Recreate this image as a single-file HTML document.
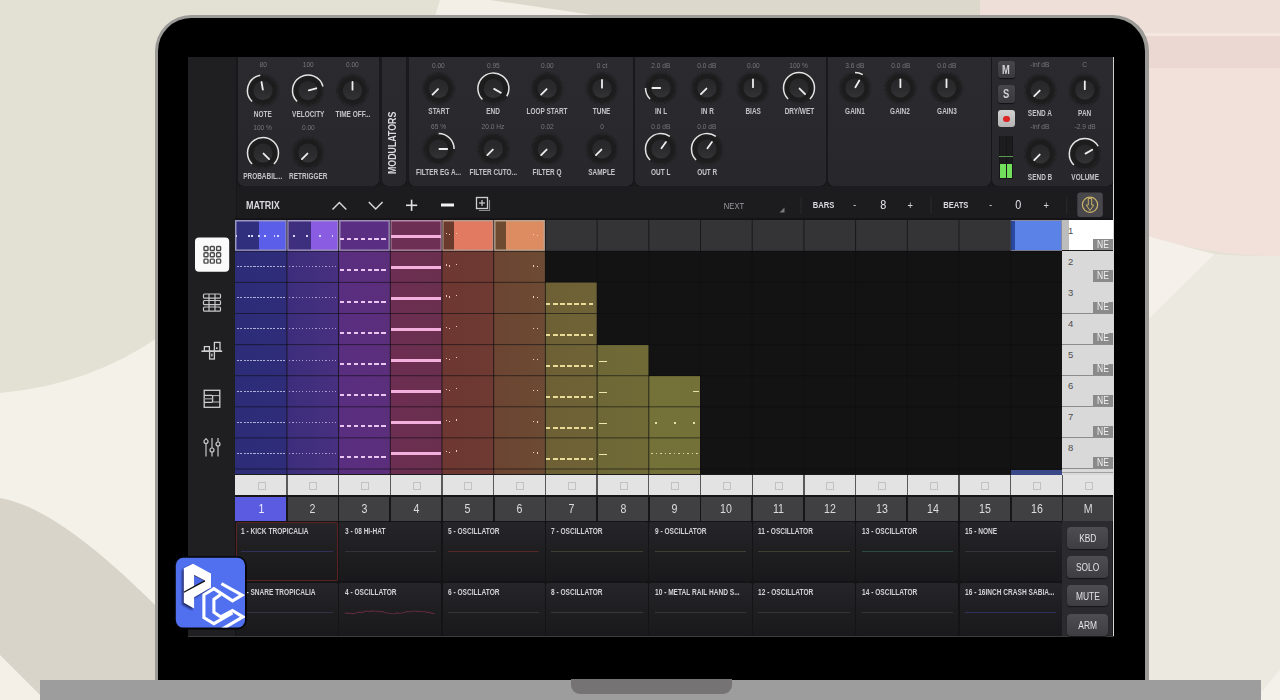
<!DOCTYPE html>
<html><head><meta charset="utf-8"><style>
html,body{margin:0;padding:0;width:1280px;height:700px;overflow:hidden;background:#e2e0d2}
body{position:relative;font-family:"Liberation Sans",sans-serif}
.t{position:absolute;white-space:nowrap}
</style></head><body>
<svg width="1280" height="700" style="position:absolute;left:0;top:0">
<defs>
<filter id="blur2"><feGaussianBlur stdDeviation="1.2"/></filter>
</defs>
<rect width="1280" height="700" fill="#e3e1d4"/>
<path d="M0,393 Q90,385 160,336 L160,700 L0,700 Z" fill="#f4f1e9"/>
<path d="M0,498 C40,505 90,540 160,610 L160,700 L0,700 Z" fill="#d9d4c9"/>
<path d="M0,655 L45,700 L0,700 Z" fill="#f4f0e8"/>
<path d="M440,0 L600,0 L600,16 L435,16 Z" fill="#f3efe6"/>
<path d="M490,0 L990,0 L990,16 L600,16 Z" fill="#ddd8cc"/>
<path d="M980,0 H1280 V256 C1240,256 1200,252 1148,236 L1100,236 L1100,16 L980,16 Z" fill="#f2e1db"/>
<rect x="980" y="0" width="300" height="33" fill="#efdfd9"/>
<rect x="1100" y="33" width="180" height="3" fill="#f4e6e1"/>
<rect x="1100" y="36" width="180" height="32" fill="#ecd8d2"/>
<path d="M1148,236 C1190,248 1210,253 1215,254 L1148,320 Z" fill="#f5f1ea"/>
<path d="M1148,320 L1215,254 C1240,256 1260,256 1280,256 L1280,700 L1148,700 Z" fill="#eceae0"/>
<path d="M1255,700 L1280,670 L1280,700 Z" fill="#f4f1ea"/>
</svg>
<div style="position:absolute;left:154.5px;top:14.5px;width:994px;height:700px;background:#9b9a97;border-radius:36px 36px 0 0"></div>
<div style="position:absolute;left:158px;top:18px;width:987px;height:700px;background:#000;border-radius:33px 33px 0 0"></div>
<div style="position:absolute;left:40.0px;top:680.0px;width:1221.0px;height:20.0px;background:#9d9d9d"></div>
<div style="position:absolute;left:571.0px;top:679.0px;width:161.0px;height:15.0px;background:#757373;border-radius:0 0 9px 9px"></div>
<div style="position:absolute;left:188.0px;top:57.0px;width:925.5px;height:579.5px;background:#1b1b1e"></div>
<div style="position:absolute;left:1112.5px;top:57.0px;width:1.5px;height:579.5px;background:#d8d8d8"></div>
<div style="position:absolute;left:188.0px;top:635.5px;width:925.5px;height:1.3px;background:#3c3c3e"></div>
<div style="position:absolute;left:188.0px;top:57.0px;width:48.0px;height:579.0px;background:#1f1f22"></div>
<div style="position:absolute;left:235.5px;top:57.0px;width:1.5px;height:579.0px;background:#161618"></div>
<div style="position:absolute;left:238.0px;top:57.0px;width:140.5px;height:128.5px;background:linear-gradient(180deg,#2b2b2f 0%,#28282c 100%);border-radius:0 0 6px 6px;box-shadow:0 1px 1px rgba(0,0,0,.5)"></div>
<div style="position:absolute;left:381.5px;top:57.0px;width:24.5px;height:128.5px;background:linear-gradient(180deg,#2b2b2f 0%,#28282c 100%);border-radius:0 0 6px 6px;box-shadow:0 1px 1px rgba(0,0,0,.5)"></div>
<div style="position:absolute;left:409.0px;top:57.0px;width:224.0px;height:128.5px;background:linear-gradient(180deg,#2b2b2f 0%,#28282c 100%);border-radius:0 0 6px 6px;box-shadow:0 1px 1px rgba(0,0,0,.5)"></div>
<div style="position:absolute;left:635.0px;top:57.0px;width:191.0px;height:128.5px;background:linear-gradient(180deg,#2b2b2f 0%,#28282c 100%);border-radius:0 0 6px 6px;box-shadow:0 1px 1px rgba(0,0,0,.5)"></div>
<div style="position:absolute;left:828.0px;top:57.0px;width:162.5px;height:128.5px;background:linear-gradient(180deg,#2b2b2f 0%,#28282c 100%);border-radius:0 0 6px 6px;box-shadow:0 1px 1px rgba(0,0,0,.5)"></div>
<div style="position:absolute;left:992.0px;top:57.0px;width:120.5px;height:128.5px;background:linear-gradient(180deg,#2b2b2f 0%,#28282c 100%);border-radius:0 0 6px 6px;box-shadow:0 1px 1px rgba(0,0,0,.5)"></div>
<div class="t" style="left:341.5px;top:136px;width:100px;height:14px;line-height:14px;text-align:center;font-size:10.5px;color:#dcdce0;font-weight:bold;transform:rotate(-90deg);"><span style="display:inline-block;transform:scaleX(0.84)">MODULATORS</span></div>
<svg width="1280" height="700" style="position:absolute;left:0;top:0">
<defs><radialGradient id="halo" cx="50%" cy="55%" r="50%"><stop offset="0%" stop-color="#141416" stop-opacity="0.95"/><stop offset="70%" stop-color="#18181a" stop-opacity="0.7"/><stop offset="100%" stop-color="#1c1c1f" stop-opacity="0"/></radialGradient>
<filter id="kblur" x="-30%" y="-30%" width="160%" height="160%"><feGaussianBlur stdDeviation="0.9"/></filter><linearGradient id="kb" x1="0" y1="0" x2="0" y2="1"><stop offset="0%" stop-color="#27272a"/><stop offset="55%" stop-color="#2b2b2e"/><stop offset="100%" stop-color="#333336"/></linearGradient></defs>
<circle cx="263" cy="90.5" r="15" fill="#1c1c1f" filter="url(#kblur)"/>
<circle cx="263" cy="90.5" r="9.6" fill="url(#kb)"/>
<line x1="262.86" y1="89.71" x2="261.51" y2="82.03" stroke="#ededed" stroke-width="1.8" stroke-linecap="round"/>
<path d="M252.04,101.46 A15.5,15.5 0 0 1 260.31,75.24" fill="none" stroke="#e4e4e4" stroke-width="1.5"/>
<circle cx="308" cy="90.5" r="15" fill="#1c1c1f" filter="url(#kblur)"/>
<circle cx="308" cy="90.5" r="9.6" fill="url(#kb)"/>
<line x1="308.77" y1="90.29" x2="316.31" y2="88.27" stroke="#ededed" stroke-width="1.8" stroke-linecap="round"/>
<path d="M297.04,101.46 A15.5,15.5 0 1 1 322.97,86.49" fill="none" stroke="#e4e4e4" stroke-width="1.5"/>
<circle cx="352.5" cy="90.5" r="15" fill="#1c1c1f" filter="url(#kblur)"/>
<circle cx="352.5" cy="90.5" r="9.6" fill="url(#kb)"/>
<line x1="352.50" y1="89.70" x2="352.50" y2="81.90" stroke="#ededed" stroke-width="1.8" stroke-linecap="round"/>
<circle cx="263" cy="153" r="15" fill="#1c1c1f" filter="url(#kblur)"/>
<circle cx="263" cy="153" r="9.6" fill="url(#kb)"/>
<line x1="263.57" y1="153.57" x2="269.08" y2="159.08" stroke="#ededed" stroke-width="1.8" stroke-linecap="round"/>
<path d="M252.04,163.96 A15.5,15.5 0 1 1 273.96,163.96" fill="none" stroke="#e4e4e4" stroke-width="1.5"/>
<circle cx="308" cy="153" r="15" fill="#1c1c1f" filter="url(#kblur)"/>
<circle cx="308" cy="153" r="9.6" fill="url(#kb)"/>
<line x1="307.43" y1="153.57" x2="301.92" y2="159.08" stroke="#ededed" stroke-width="1.8" stroke-linecap="round"/>
<circle cx="438.6" cy="88.5" r="15" fill="#1c1c1f" filter="url(#kblur)"/>
<circle cx="438.6" cy="88.5" r="9.6" fill="url(#kb)"/>
<line x1="438.03" y1="89.07" x2="432.52" y2="94.58" stroke="#ededed" stroke-width="1.8" stroke-linecap="round"/>
<circle cx="493.4" cy="88.5" r="15" fill="#1c1c1f" filter="url(#kblur)"/>
<circle cx="493.4" cy="88.5" r="9.6" fill="url(#kb)"/>
<line x1="494.09" y1="88.90" x2="500.85" y2="92.80" stroke="#ededed" stroke-width="1.8" stroke-linecap="round"/>
<path d="M482.44,99.46 A15.5,15.5 0 1 1 506.82,96.25" fill="none" stroke="#e4e4e4" stroke-width="1.5"/>
<circle cx="547.2" cy="88.5" r="15" fill="#1c1c1f" filter="url(#kblur)"/>
<circle cx="547.2" cy="88.5" r="9.6" fill="url(#kb)"/>
<line x1="546.63" y1="89.07" x2="541.12" y2="94.58" stroke="#ededed" stroke-width="1.8" stroke-linecap="round"/>
<circle cx="602" cy="88.5" r="15" fill="#1c1c1f" filter="url(#kblur)"/>
<circle cx="602" cy="88.5" r="9.6" fill="url(#kb)"/>
<line x1="602.00" y1="87.70" x2="602.00" y2="79.90" stroke="#ededed" stroke-width="1.8" stroke-linecap="round"/>
<circle cx="438.6" cy="149" r="15" fill="#1c1c1f" filter="url(#kblur)"/>
<circle cx="438.6" cy="149" r="9.6" fill="url(#kb)"/>
<line x1="439.40" y1="149.00" x2="447.20" y2="149.00" stroke="#ededed" stroke-width="1.8" stroke-linecap="round"/>
<path d="M438.60,133.50 A15.5,15.5 0 0 1 454.10,149.00" fill="none" stroke="#e4e4e4" stroke-width="1.5"/>
<circle cx="493.4" cy="149" r="15" fill="#1c1c1f" filter="url(#kblur)"/>
<circle cx="493.4" cy="149" r="9.6" fill="url(#kb)"/>
<line x1="492.83" y1="149.57" x2="487.32" y2="155.08" stroke="#ededed" stroke-width="1.8" stroke-linecap="round"/>
<circle cx="547.2" cy="149" r="15" fill="#1c1c1f" filter="url(#kblur)"/>
<circle cx="547.2" cy="149" r="9.6" fill="url(#kb)"/>
<line x1="546.63" y1="149.57" x2="541.12" y2="155.08" stroke="#ededed" stroke-width="1.8" stroke-linecap="round"/>
<circle cx="602" cy="149" r="15" fill="#1c1c1f" filter="url(#kblur)"/>
<circle cx="602" cy="149" r="9.6" fill="url(#kb)"/>
<line x1="601.43" y1="149.57" x2="595.92" y2="155.08" stroke="#ededed" stroke-width="1.8" stroke-linecap="round"/>
<circle cx="661" cy="88" r="15" fill="#1c1c1f" filter="url(#kblur)"/>
<circle cx="661" cy="88" r="9.6" fill="url(#kb)"/>
<line x1="660.20" y1="88.00" x2="652.40" y2="88.00" stroke="#ededed" stroke-width="1.8" stroke-linecap="round"/>
<path d="M650.04,98.96 A15.5,15.5 0 0 1 645.50,88.00" fill="none" stroke="#e4e4e4" stroke-width="1.5"/>
<circle cx="707" cy="88" r="15" fill="#1c1c1f" filter="url(#kblur)"/>
<circle cx="707" cy="88" r="9.6" fill="url(#kb)"/>
<line x1="706.43" y1="88.57" x2="700.92" y2="94.08" stroke="#ededed" stroke-width="1.8" stroke-linecap="round"/>
<circle cx="753" cy="88" r="15" fill="#1c1c1f" filter="url(#kblur)"/>
<circle cx="753" cy="88" r="9.6" fill="url(#kb)"/>
<line x1="753.00" y1="87.20" x2="753.00" y2="79.40" stroke="#ededed" stroke-width="1.8" stroke-linecap="round"/>
<circle cx="799" cy="88" r="15" fill="#1c1c1f" filter="url(#kblur)"/>
<circle cx="799" cy="88" r="9.6" fill="url(#kb)"/>
<line x1="799.57" y1="88.57" x2="805.08" y2="94.08" stroke="#ededed" stroke-width="1.8" stroke-linecap="round"/>
<path d="M788.04,98.96 A15.5,15.5 0 1 1 809.96,98.96" fill="none" stroke="#e4e4e4" stroke-width="1.5"/>
<circle cx="661" cy="149" r="15" fill="#1c1c1f" filter="url(#kblur)"/>
<circle cx="661" cy="149" r="9.6" fill="url(#kb)"/>
<line x1="661.46" y1="148.34" x2="665.93" y2="141.96" stroke="#ededed" stroke-width="1.8" stroke-linecap="round"/>
<path d="M650.04,159.96 A15.5,15.5 0 0 1 669.89,136.30" fill="none" stroke="#e4e4e4" stroke-width="1.5"/>
<circle cx="707" cy="149" r="15" fill="#1c1c1f" filter="url(#kblur)"/>
<circle cx="707" cy="149" r="9.6" fill="url(#kb)"/>
<line x1="707.46" y1="148.34" x2="711.93" y2="141.96" stroke="#ededed" stroke-width="1.8" stroke-linecap="round"/>
<path d="M696.04,159.96 A15.5,15.5 0 0 1 715.89,136.30" fill="none" stroke="#e4e4e4" stroke-width="1.5"/>
<circle cx="855" cy="88" r="15" fill="#1c1c1f" filter="url(#kblur)"/>
<circle cx="855" cy="88" r="9.6" fill="url(#kb)"/>
<line x1="855.40" y1="87.31" x2="859.30" y2="80.55" stroke="#ededed" stroke-width="1.8" stroke-linecap="round"/>
<path d="M855.00,72.50 A15.5,15.5 0 0 1 862.75,74.58" fill="none" stroke="#e4e4e4" stroke-width="1.5"/>
<circle cx="900.4" cy="88" r="15" fill="#1c1c1f" filter="url(#kblur)"/>
<circle cx="900.4" cy="88" r="9.6" fill="url(#kb)"/>
<line x1="900.40" y1="87.20" x2="900.40" y2="79.40" stroke="#ededed" stroke-width="1.8" stroke-linecap="round"/>
<circle cx="946.5" cy="88" r="15" fill="#1c1c1f" filter="url(#kblur)"/>
<circle cx="946.5" cy="88" r="9.6" fill="url(#kb)"/>
<line x1="946.50" y1="87.20" x2="946.50" y2="79.40" stroke="#ededed" stroke-width="1.8" stroke-linecap="round"/>
<circle cx="1040.3" cy="90" r="15" fill="#1c1c1f" filter="url(#kblur)"/>
<circle cx="1040.3" cy="90" r="9.6" fill="url(#kb)"/>
<line x1="1039.73" y1="90.57" x2="1034.22" y2="96.08" stroke="#ededed" stroke-width="1.8" stroke-linecap="round"/>
<circle cx="1084.8" cy="90" r="15" fill="#1c1c1f" filter="url(#kblur)"/>
<circle cx="1084.8" cy="90" r="9.6" fill="url(#kb)"/>
<line x1="1084.80" y1="89.20" x2="1084.80" y2="81.40" stroke="#ededed" stroke-width="1.8" stroke-linecap="round"/>
<circle cx="1040.3" cy="154" r="15" fill="#1c1c1f" filter="url(#kblur)"/>
<circle cx="1040.3" cy="154" r="9.6" fill="url(#kb)"/>
<line x1="1039.73" y1="154.57" x2="1034.22" y2="160.08" stroke="#ededed" stroke-width="1.8" stroke-linecap="round"/>
<circle cx="1084.8" cy="154" r="15" fill="#1c1c1f" filter="url(#kblur)"/>
<circle cx="1084.8" cy="154" r="9.6" fill="url(#kb)"/>
<line x1="1085.49" y1="153.60" x2="1092.25" y2="149.70" stroke="#ededed" stroke-width="1.8" stroke-linecap="round"/>
<path d="M1073.84,164.96 A15.5,15.5 0 1 1 1098.22,146.25" fill="none" stroke="#e4e4e4" stroke-width="1.5"/>
</svg>
<div class="t" style="left:163.0px;top:56.9px;width:200px;height:15.0px;line-height:15.0px;text-align:center;font-size:7.5px;color:#77777c;font-weight:normal;"><span style="display:inline-block;transform:scaleX(0.88);transform-origin:center;letter-spacing:0px">80</span></div>
<div class="t" style="left:163.0px;top:105.5px;width:200px;height:17.0px;line-height:17.0px;text-align:center;font-size:8.5px;color:#c4c4c8;font-weight:bold;"><span style="display:inline-block;transform:scaleX(0.76);transform-origin:center;letter-spacing:0px">NOTE</span></div>
<div class="t" style="left:208.0px;top:56.9px;width:200px;height:15.0px;line-height:15.0px;text-align:center;font-size:7.5px;color:#77777c;font-weight:normal;"><span style="display:inline-block;transform:scaleX(0.88);transform-origin:center;letter-spacing:0px">100</span></div>
<div class="t" style="left:208.0px;top:105.5px;width:200px;height:17.0px;line-height:17.0px;text-align:center;font-size:8.5px;color:#c4c4c8;font-weight:bold;"><span style="display:inline-block;transform:scaleX(0.76);transform-origin:center;letter-spacing:0px">VELOCITY</span></div>
<div class="t" style="left:252.5px;top:56.9px;width:200px;height:15.0px;line-height:15.0px;text-align:center;font-size:7.5px;color:#77777c;font-weight:normal;"><span style="display:inline-block;transform:scaleX(0.88);transform-origin:center;letter-spacing:0px">0.00</span></div>
<div class="t" style="left:252.5px;top:105.5px;width:200px;height:17.0px;line-height:17.0px;text-align:center;font-size:8.5px;color:#c4c4c8;font-weight:bold;"><span style="display:inline-block;transform:scaleX(0.76);transform-origin:center;letter-spacing:0px">TIME OFF...</span></div>
<div class="t" style="left:163.0px;top:119.9px;width:200px;height:15.0px;line-height:15.0px;text-align:center;font-size:7.5px;color:#77777c;font-weight:normal;"><span style="display:inline-block;transform:scaleX(0.88);transform-origin:center;letter-spacing:0px">100 %</span></div>
<div class="t" style="left:163.0px;top:167.9px;width:200px;height:17.0px;line-height:17.0px;text-align:center;font-size:8.5px;color:#c4c4c8;font-weight:bold;"><span style="display:inline-block;transform:scaleX(0.76);transform-origin:center;letter-spacing:0px">PROBABIL...</span></div>
<div class="t" style="left:208.0px;top:119.9px;width:200px;height:15.0px;line-height:15.0px;text-align:center;font-size:7.5px;color:#77777c;font-weight:normal;"><span style="display:inline-block;transform:scaleX(0.88);transform-origin:center;letter-spacing:0px">0.00</span></div>
<div class="t" style="left:208.0px;top:167.9px;width:200px;height:17.0px;line-height:17.0px;text-align:center;font-size:8.5px;color:#c4c4c8;font-weight:bold;"><span style="display:inline-block;transform:scaleX(0.76);transform-origin:center;letter-spacing:0px">RETRIGGER</span></div>
<div class="t" style="left:338.6px;top:57.7px;width:200px;height:15.0px;line-height:15.0px;text-align:center;font-size:7.5px;color:#77777c;font-weight:normal;"><span style="display:inline-block;transform:scaleX(0.88);transform-origin:center;letter-spacing:0px">0.00</span></div>
<div class="t" style="left:338.6px;top:102.7px;width:200px;height:17.0px;line-height:17.0px;text-align:center;font-size:8.5px;color:#c4c4c8;font-weight:bold;"><span style="display:inline-block;transform:scaleX(0.76);transform-origin:center;letter-spacing:0px">START</span></div>
<div class="t" style="left:393.4px;top:57.7px;width:200px;height:15.0px;line-height:15.0px;text-align:center;font-size:7.5px;color:#77777c;font-weight:normal;"><span style="display:inline-block;transform:scaleX(0.88);transform-origin:center;letter-spacing:0px">0.95</span></div>
<div class="t" style="left:393.4px;top:102.7px;width:200px;height:17.0px;line-height:17.0px;text-align:center;font-size:8.5px;color:#c4c4c8;font-weight:bold;"><span style="display:inline-block;transform:scaleX(0.76);transform-origin:center;letter-spacing:0px">END</span></div>
<div class="t" style="left:447.2px;top:57.7px;width:200px;height:15.0px;line-height:15.0px;text-align:center;font-size:7.5px;color:#77777c;font-weight:normal;"><span style="display:inline-block;transform:scaleX(0.88);transform-origin:center;letter-spacing:0px">0.00</span></div>
<div class="t" style="left:447.2px;top:102.7px;width:200px;height:17.0px;line-height:17.0px;text-align:center;font-size:8.5px;color:#c4c4c8;font-weight:bold;"><span style="display:inline-block;transform:scaleX(0.76);transform-origin:center;letter-spacing:0px">LOOP START</span></div>
<div class="t" style="left:502.0px;top:57.7px;width:200px;height:15.0px;line-height:15.0px;text-align:center;font-size:7.5px;color:#77777c;font-weight:normal;"><span style="display:inline-block;transform:scaleX(0.88);transform-origin:center;letter-spacing:0px">0 ct</span></div>
<div class="t" style="left:502.0px;top:102.7px;width:200px;height:17.0px;line-height:17.0px;text-align:center;font-size:8.5px;color:#c4c4c8;font-weight:bold;"><span style="display:inline-block;transform:scaleX(0.76);transform-origin:center;letter-spacing:0px">TUNE</span></div>
<div class="t" style="left:338.6px;top:118.5px;width:200px;height:15.0px;line-height:15.0px;text-align:center;font-size:7.5px;color:#77777c;font-weight:normal;"><span style="display:inline-block;transform:scaleX(0.88);transform-origin:center;letter-spacing:0px">65 %</span></div>
<div class="t" style="left:338.6px;top:163.5px;width:200px;height:17.0px;line-height:17.0px;text-align:center;font-size:8.5px;color:#c4c4c8;font-weight:bold;"><span style="display:inline-block;transform:scaleX(0.76);transform-origin:center;letter-spacing:0px">FILTER EG A...</span></div>
<div class="t" style="left:393.4px;top:118.5px;width:200px;height:15.0px;line-height:15.0px;text-align:center;font-size:7.5px;color:#77777c;font-weight:normal;"><span style="display:inline-block;transform:scaleX(0.88);transform-origin:center;letter-spacing:0px">20.0 Hz</span></div>
<div class="t" style="left:393.4px;top:163.5px;width:200px;height:17.0px;line-height:17.0px;text-align:center;font-size:8.5px;color:#c4c4c8;font-weight:bold;"><span style="display:inline-block;transform:scaleX(0.76);transform-origin:center;letter-spacing:0px">FILTER CUTO...</span></div>
<div class="t" style="left:447.2px;top:118.5px;width:200px;height:15.0px;line-height:15.0px;text-align:center;font-size:7.5px;color:#77777c;font-weight:normal;"><span style="display:inline-block;transform:scaleX(0.88);transform-origin:center;letter-spacing:0px">0.02</span></div>
<div class="t" style="left:447.2px;top:163.5px;width:200px;height:17.0px;line-height:17.0px;text-align:center;font-size:8.5px;color:#c4c4c8;font-weight:bold;"><span style="display:inline-block;transform:scaleX(0.76);transform-origin:center;letter-spacing:0px">FILTER Q</span></div>
<div class="t" style="left:502.0px;top:118.5px;width:200px;height:15.0px;line-height:15.0px;text-align:center;font-size:7.5px;color:#77777c;font-weight:normal;"><span style="display:inline-block;transform:scaleX(0.88);transform-origin:center;letter-spacing:0px">0</span></div>
<div class="t" style="left:502.0px;top:163.5px;width:200px;height:17.0px;line-height:17.0px;text-align:center;font-size:8.5px;color:#c4c4c8;font-weight:bold;"><span style="display:inline-block;transform:scaleX(0.76);transform-origin:center;letter-spacing:0px">SAMPLE</span></div>
<div class="t" style="left:561.0px;top:57.5px;width:200px;height:15.0px;line-height:15.0px;text-align:center;font-size:7.5px;color:#77777c;font-weight:normal;"><span style="display:inline-block;transform:scaleX(0.88);transform-origin:center;letter-spacing:0px">2.0 dB</span></div>
<div class="t" style="left:561.0px;top:102.5px;width:200px;height:17.0px;line-height:17.0px;text-align:center;font-size:8.5px;color:#c4c4c8;font-weight:bold;"><span style="display:inline-block;transform:scaleX(0.76);transform-origin:center;letter-spacing:0px">IN L</span></div>
<div class="t" style="left:607.0px;top:57.5px;width:200px;height:15.0px;line-height:15.0px;text-align:center;font-size:7.5px;color:#77777c;font-weight:normal;"><span style="display:inline-block;transform:scaleX(0.88);transform-origin:center;letter-spacing:0px">0.0 dB</span></div>
<div class="t" style="left:607.0px;top:102.5px;width:200px;height:17.0px;line-height:17.0px;text-align:center;font-size:8.5px;color:#c4c4c8;font-weight:bold;"><span style="display:inline-block;transform:scaleX(0.76);transform-origin:center;letter-spacing:0px">IN R</span></div>
<div class="t" style="left:653.0px;top:57.5px;width:200px;height:15.0px;line-height:15.0px;text-align:center;font-size:7.5px;color:#77777c;font-weight:normal;"><span style="display:inline-block;transform:scaleX(0.88);transform-origin:center;letter-spacing:0px">0.00</span></div>
<div class="t" style="left:653.0px;top:102.5px;width:200px;height:17.0px;line-height:17.0px;text-align:center;font-size:8.5px;color:#c4c4c8;font-weight:bold;"><span style="display:inline-block;transform:scaleX(0.76);transform-origin:center;letter-spacing:0px">BIAS</span></div>
<div class="t" style="left:699.0px;top:57.5px;width:200px;height:15.0px;line-height:15.0px;text-align:center;font-size:7.5px;color:#77777c;font-weight:normal;"><span style="display:inline-block;transform:scaleX(0.88);transform-origin:center;letter-spacing:0px">100 %</span></div>
<div class="t" style="left:699.0px;top:102.5px;width:200px;height:17.0px;line-height:17.0px;text-align:center;font-size:8.5px;color:#c4c4c8;font-weight:bold;"><span style="display:inline-block;transform:scaleX(0.76);transform-origin:center;letter-spacing:0px">DRY/WET</span></div>
<div class="t" style="left:561.0px;top:118.5px;width:200px;height:15.0px;line-height:15.0px;text-align:center;font-size:7.5px;color:#77777c;font-weight:normal;"><span style="display:inline-block;transform:scaleX(0.88);transform-origin:center;letter-spacing:0px">0.0 dB</span></div>
<div class="t" style="left:561.0px;top:163.5px;width:200px;height:17.0px;line-height:17.0px;text-align:center;font-size:8.5px;color:#c4c4c8;font-weight:bold;"><span style="display:inline-block;transform:scaleX(0.76);transform-origin:center;letter-spacing:0px">OUT L</span></div>
<div class="t" style="left:607.0px;top:118.5px;width:200px;height:15.0px;line-height:15.0px;text-align:center;font-size:7.5px;color:#77777c;font-weight:normal;"><span style="display:inline-block;transform:scaleX(0.88);transform-origin:center;letter-spacing:0px">0.0 dB</span></div>
<div class="t" style="left:607.0px;top:163.5px;width:200px;height:17.0px;line-height:17.0px;text-align:center;font-size:8.5px;color:#c4c4c8;font-weight:bold;"><span style="display:inline-block;transform:scaleX(0.76);transform-origin:center;letter-spacing:0px">OUT R</span></div>
<div class="t" style="left:755.0px;top:57.7px;width:200px;height:15.0px;line-height:15.0px;text-align:center;font-size:7.5px;color:#77777c;font-weight:normal;"><span style="display:inline-block;transform:scaleX(0.88);transform-origin:center;letter-spacing:0px">3.6 dB</span></div>
<div class="t" style="left:755.0px;top:102.9px;width:200px;height:17.0px;line-height:17.0px;text-align:center;font-size:8.5px;color:#c4c4c8;font-weight:bold;"><span style="display:inline-block;transform:scaleX(0.76);transform-origin:center;letter-spacing:0px">GAIN1</span></div>
<div class="t" style="left:800.4px;top:57.7px;width:200px;height:15.0px;line-height:15.0px;text-align:center;font-size:7.5px;color:#77777c;font-weight:normal;"><span style="display:inline-block;transform:scaleX(0.88);transform-origin:center;letter-spacing:0px">0.0 dB</span></div>
<div class="t" style="left:800.4px;top:102.9px;width:200px;height:17.0px;line-height:17.0px;text-align:center;font-size:8.5px;color:#c4c4c8;font-weight:bold;"><span style="display:inline-block;transform:scaleX(0.76);transform-origin:center;letter-spacing:0px">GAIN2</span></div>
<div class="t" style="left:846.5px;top:57.7px;width:200px;height:15.0px;line-height:15.0px;text-align:center;font-size:7.5px;color:#77777c;font-weight:normal;"><span style="display:inline-block;transform:scaleX(0.88);transform-origin:center;letter-spacing:0px">0.0 dB</span></div>
<div class="t" style="left:846.5px;top:102.9px;width:200px;height:17.0px;line-height:17.0px;text-align:center;font-size:8.5px;color:#c4c4c8;font-weight:bold;"><span style="display:inline-block;transform:scaleX(0.76);transform-origin:center;letter-spacing:0px">GAIN3</span></div>
<div class="t" style="left:940.3px;top:57.0px;width:200px;height:15.0px;line-height:15.0px;text-align:center;font-size:7.5px;color:#77777c;font-weight:normal;"><span style="display:inline-block;transform:scaleX(0.88);transform-origin:center;letter-spacing:0px">-inf dB</span></div>
<div class="t" style="left:940.3px;top:105.2px;width:200px;height:17.0px;line-height:17.0px;text-align:center;font-size:8.5px;color:#c4c4c8;font-weight:bold;"><span style="display:inline-block;transform:scaleX(0.76);transform-origin:center;letter-spacing:0px">SEND A</span></div>
<div class="t" style="left:984.8px;top:57.0px;width:200px;height:15.0px;line-height:15.0px;text-align:center;font-size:7.5px;color:#77777c;font-weight:normal;"><span style="display:inline-block;transform:scaleX(0.88);transform-origin:center;letter-spacing:0px">C</span></div>
<div class="t" style="left:984.8px;top:105.2px;width:200px;height:17.0px;line-height:17.0px;text-align:center;font-size:8.5px;color:#c4c4c8;font-weight:bold;"><span style="display:inline-block;transform:scaleX(0.76);transform-origin:center;letter-spacing:0px">PAN</span></div>
<div class="t" style="left:940.3px;top:119.4px;width:200px;height:15.0px;line-height:15.0px;text-align:center;font-size:7.5px;color:#77777c;font-weight:normal;"><span style="display:inline-block;transform:scaleX(0.88);transform-origin:center;letter-spacing:0px">-inf dB</span></div>
<div class="t" style="left:940.3px;top:168.5px;width:200px;height:17.0px;line-height:17.0px;text-align:center;font-size:8.5px;color:#c4c4c8;font-weight:bold;"><span style="display:inline-block;transform:scaleX(0.76);transform-origin:center;letter-spacing:0px">SEND B</span></div>
<div class="t" style="left:984.8px;top:119.4px;width:200px;height:15.0px;line-height:15.0px;text-align:center;font-size:7.5px;color:#77777c;font-weight:normal;"><span style="display:inline-block;transform:scaleX(0.88);transform-origin:center;letter-spacing:0px">-2.9 dB</span></div>
<div class="t" style="left:984.8px;top:168.5px;width:200px;height:17.0px;line-height:17.0px;text-align:center;font-size:8.5px;color:#c4c4c8;font-weight:bold;"><span style="display:inline-block;transform:scaleX(0.76);transform-origin:center;letter-spacing:0px">VOLUME</span></div>
<div style="position:absolute;left:997.5px;top:60.5px;width:17.5px;height:17.5px;background:linear-gradient(#47474b,#3a3a3e);border-radius:3px;box-shadow:0 1px 1px #111"></div>
<div class="t" style="left:906.2px;top:57.5px;width:200px;height:24px;line-height:24px;text-align:center;font-size:12px;color:#d2d2d6;font-weight:bold;"><span style="display:inline-block;transform:scaleX(0.78);transform-origin:center;letter-spacing:0px">M</span></div>
<div style="position:absolute;left:997.5px;top:85.0px;width:17.5px;height:17.7px;background:linear-gradient(#47474b,#3a3a3e);border-radius:3px;box-shadow:0 1px 1px #111"></div>
<div class="t" style="left:906.2px;top:82.0px;width:200px;height:24px;line-height:24px;text-align:center;font-size:12px;color:#d2d2d6;font-weight:bold;"><span style="display:inline-block;transform:scaleX(0.78);transform-origin:center;letter-spacing:0px">S</span></div>
<div style="position:absolute;left:997.5px;top:110.0px;width:17.5px;height:17.3px;background:linear-gradient(#d2d2d2,#b4b4b4);border-radius:3px"></div>
<div style="position:absolute;left:1003px;top:115.5px;width:6.5px;height:6.5px;border-radius:50%;background:#dc2424"></div>
<div style="position:absolute;left:999.0px;top:135.5px;width:14.0px;height:43.0px;background:#161618"></div>
<div style="position:absolute;left:1000.0px;top:136.0px;width:5.5px;height:42.0px;background:#1c1c1e"></div>
<div style="position:absolute;left:1006.5px;top:136.0px;width:5.5px;height:42.0px;background:#1c1c1e"></div>
<div style="position:absolute;left:1000.0px;top:163.5px;width:5.5px;height:14.5px;background:#72e05c"></div>
<div style="position:absolute;left:1006.5px;top:163.5px;width:5.5px;height:14.5px;background:#72e05c"></div>
<div style="position:absolute;left:999.0px;top:155.5px;width:14.0px;height:1.0px;background:#5a9a50"></div>
<div style="position:absolute;left:237.0px;top:186.0px;width:875.5px;height:33.5px;background:#1c1c1f"></div>
<div class="t" style="left:246.0px;top:195.5px;width:200px;height:20px;line-height:20px;text-align:left;font-size:10px;color:#dadade;font-weight:bold;"><span style="display:inline-block;transform:scaleX(0.9);transform-origin:left;letter-spacing:0px">MATRIX</span></div>
<svg width="1280" height="700" style="position:absolute;left:0;top:0">
<polyline points="332.5,209.5 339.4,202.5 346.3,209.5" fill="none" stroke="#d6d6d6" stroke-width="1.5"/>
<polyline points="368.8,202 375.7,209 382.6,202" fill="none" stroke="#d6d6d6" stroke-width="1.5"/>
<line x1="406" y1="205.3" x2="417.2" y2="205.3" stroke="#e0e0e0" stroke-width="1.6"/>
<line x1="411.6" y1="199.7" x2="411.6" y2="210.9" stroke="#e0e0e0" stroke-width="1.6"/>
<line x1="441" y1="205" x2="454" y2="205" stroke="#f2f2f2" stroke-width="3"/>
<rect x="476.5" y="197.5" width="11" height="11" fill="none" stroke="#cfcfcf" stroke-width="1.3"/>
<polyline points="489.5,200 489.5,210.5 479,210.5" fill="none" stroke="#8a8a8a" stroke-width="1.1"/>
<line x1="479" y1="203" x2="485" y2="203" stroke="#cfcfcf" stroke-width="1.2"/>
<line x1="482" y1="200" x2="482" y2="206" stroke="#cfcfcf" stroke-width="1.2"/>
<path d="M779.5,212.5 L784.5,207.5 L784.5,212.5 Z" fill="#7a7a7a"/>
<line x1="801" y1="197" x2="801" y2="214" stroke="#2a2a2c" stroke-width="1"/>
<line x1="931" y1="197" x2="931" y2="214" stroke="#2a2a2c" stroke-width="1"/>
<line x1="1066.7" y1="197" x2="1066.7" y2="214" stroke="#2a2a2c" stroke-width="1"/>
<rect x="1077.3" y="192.4" width="25.5" height="24.6" rx="3" fill="#48484c"/>
<circle cx="1090" cy="204.7" r="7.6" fill="none" stroke="#c9b268" stroke-width="1.2"/>
<path d="M1088.3,198.5 V205 H1086.2 L1090,210.5 L1093.8,205 H1091.7 V198.5 Z" fill="none" stroke="#c9b268" stroke-width="1"/>
</svg>
<div class="t" style="left:634.5px;top:196.5px;width:200px;height:18px;line-height:18px;text-align:center;font-size:9px;color:#9a9a9e;font-weight:normal;"><span style="display:inline-block;transform:scaleX(0.85);transform-origin:center;letter-spacing:0px">NEXT</span></div>
<div class="t" style="left:723.0px;top:195.0px;width:200px;height:19.0px;line-height:19.0px;text-align:center;font-size:9.5px;color:#dcdce0;font-weight:bold;"><span style="display:inline-block;transform:scaleX(0.8);transform-origin:center;letter-spacing:0px">BARS</span></div>
<div class="t" style="left:755.0px;top:195.0px;width:200px;height:20px;line-height:20px;text-align:center;font-size:10px;color:#d6d6da;font-weight:normal;"><span style="display:inline-block;transform:scaleX(0.85);transform-origin:center;letter-spacing:0px">-</span></div>
<div class="t" style="left:783.0px;top:193.0px;width:200px;height:24px;line-height:24px;text-align:center;font-size:12px;color:#e6e6ea;font-weight:normal;"><span style="display:inline-block;transform:scaleX(0.9);transform-origin:center;letter-spacing:0px">8</span></div>
<div class="t" style="left:810.0px;top:194.0px;width:200px;height:22px;line-height:22px;text-align:center;font-size:11px;color:#d6d6da;font-weight:normal;"><span style="display:inline-block;transform:scaleX(0.85);transform-origin:center;letter-spacing:0px">+</span></div>
<div class="t" style="left:856.0px;top:195.0px;width:200px;height:19.0px;line-height:19.0px;text-align:center;font-size:9.5px;color:#dcdce0;font-weight:bold;"><span style="display:inline-block;transform:scaleX(0.8);transform-origin:center;letter-spacing:0px">BEATS</span></div>
<div class="t" style="left:890.4px;top:195.0px;width:200px;height:20px;line-height:20px;text-align:center;font-size:10px;color:#d6d6da;font-weight:normal;"><span style="display:inline-block;transform:scaleX(0.85);transform-origin:center;letter-spacing:0px">-</span></div>
<div class="t" style="left:918.3px;top:193.0px;width:200px;height:24px;line-height:24px;text-align:center;font-size:12px;color:#e6e6ea;font-weight:normal;"><span style="display:inline-block;transform:scaleX(0.9);transform-origin:center;letter-spacing:0px">0</span></div>
<div class="t" style="left:945.8px;top:194.0px;width:200px;height:22px;line-height:22px;text-align:center;font-size:11px;color:#d6d6da;font-weight:normal;"><span style="display:inline-block;transform:scaleX(0.85);transform-origin:center;letter-spacing:0px">+</span></div>
<div style="position:absolute;left:235.2px;top:220.2px;width:827.2px;height:254.3px;background:#131314"></div>
<div style="position:absolute;left:235.2px;top:217.8px;width:877.3px;height:2.4px;background:#141416"></div>
<div style="position:absolute;left:545.4px;top:220.2px;width:465.3px;height:31.1px;background:#343436"></div>
<div style="position:absolute;left:1010.7px;top:220.2px;width:51.7px;height:31.1px;background:#343436"></div>
<div style="position:absolute;left:235.2px;top:251.3px;width:51.7px;height:223.2px;background:linear-gradient(90deg,#2c2c78,#2f2d7a)"></div>
<div style="position:absolute;left:286.9px;top:251.3px;width:51.7px;height:223.2px;background:linear-gradient(90deg,#3c2e7c,#47307f)"></div>
<div style="position:absolute;left:338.6px;top:251.3px;width:51.7px;height:223.2px;background:linear-gradient(90deg,#5a2e80,#5c2f7c)"></div>
<div style="position:absolute;left:390.3px;top:251.3px;width:51.7px;height:223.2px;background:linear-gradient(90deg,#6c2e52,#6a2f4e)"></div>
<div style="position:absolute;left:442.0px;top:251.3px;width:51.7px;height:223.2px;background:linear-gradient(90deg,#6e3732,#6e3a32)"></div>
<div style="position:absolute;left:493.7px;top:251.3px;width:51.7px;height:223.2px;background:linear-gradient(90deg,#6c4532,#6c4a33)"></div>
<div style="position:absolute;left:545.4px;top:282.4px;width:51.7px;height:192.1px;background:linear-gradient(90deg,#6e6035,#6e6336)"></div>
<div style="position:absolute;left:597.1px;top:344.6px;width:51.7px;height:129.9px;background:linear-gradient(90deg,#6d6835,#6f6a36)"></div>
<div style="position:absolute;left:648.8px;top:375.7px;width:51.7px;height:98.8px;background:linear-gradient(90deg,#747238,#737138)"></div>
<div style="position:absolute;left:235.2px;top:220.2px;width:51.7px;height:31.1px;background:linear-gradient(90deg,#2f2f7e 0%,#2f2f7e 47%,#5a5ee8 47%,#5a5ee8 100%);box-shadow:inset 0 0 0 1.5px #9a96c4"></div>
<div style="position:absolute;left:286.9px;top:220.2px;width:51.7px;height:31.1px;background:linear-gradient(90deg,#3e2f7e 0%,#3e2f7e 47%,#8a5ce2 47%,#8a5ce2 100%);box-shadow:inset 0 0 0 1.5px #a496c8"></div>
<div style="position:absolute;left:338.6px;top:220.2px;width:51.7px;height:31.1px;background:linear-gradient(90deg,#5a2e82 0%,#5a2e82 0%,#5a2e82 0%,#5a2e82 100%);box-shadow:inset 0 0 0 1.5px #a08cb8"></div>
<div style="position:absolute;left:390.3px;top:220.2px;width:51.7px;height:31.1px;background:linear-gradient(90deg,#6e2f55 0%,#6e2f55 0%,#6e2f55 0%,#6e2f55 100%);box-shadow:inset 0 0 0 1.5px #b48aa8"></div>
<div style="position:absolute;left:442.0px;top:220.2px;width:51.7px;height:31.1px;background:linear-gradient(90deg,#6a3a2c 0%,#6a3a2c 23%,#e27a62 23%,#e27a62 100%);box-shadow:inset 0 0 0 1.5px #b89a8c"></div>
<div style="position:absolute;left:493.7px;top:220.2px;width:51.7px;height:31.1px;background:linear-gradient(90deg,#6e4a30 0%,#6e4a30 23%,#dc8c60 23%,#dc8c60 100%);box-shadow:inset 0 0 0 1.5px #bca48e"></div>
<div style="position:absolute;left:1009.7px;top:220.2px;width:52.7px;height:31.1px;background:linear-gradient(90deg,#2a4aa0 0,#2a4aa0 5px,#5b82e6 5px);box-shadow:inset 0 0 0 1px #8a8aa0"></div>
<svg width="1280" height="700" style="position:absolute;left:0;top:0">
<line x1="286.9" y1="220.2" x2="286.9" y2="474.5" stroke="#101012" stroke-opacity="0.75" stroke-width="1"/>
<line x1="338.6" y1="220.2" x2="338.6" y2="474.5" stroke="#101012" stroke-opacity="0.75" stroke-width="1"/>
<line x1="390.3" y1="220.2" x2="390.3" y2="474.5" stroke="#101012" stroke-opacity="0.75" stroke-width="1"/>
<line x1="442.0" y1="220.2" x2="442.0" y2="474.5" stroke="#101012" stroke-opacity="0.75" stroke-width="1"/>
<line x1="493.7" y1="220.2" x2="493.7" y2="474.5" stroke="#101012" stroke-opacity="0.75" stroke-width="1"/>
<line x1="545.4" y1="220.2" x2="545.4" y2="474.5" stroke="#101012" stroke-opacity="0.75" stroke-width="1"/>
<line x1="597.1" y1="220.2" x2="597.1" y2="474.5" stroke="#101012" stroke-opacity="0.75" stroke-width="1"/>
<line x1="648.8" y1="220.2" x2="648.8" y2="474.5" stroke="#101012" stroke-opacity="0.75" stroke-width="1"/>
<line x1="700.5" y1="220.2" x2="700.5" y2="474.5" stroke="#101012" stroke-opacity="0.75" stroke-width="1"/>
<line x1="752.2" y1="220.2" x2="752.2" y2="474.5" stroke="#101012" stroke-opacity="0.75" stroke-width="1"/>
<line x1="803.9" y1="220.2" x2="803.9" y2="474.5" stroke="#101012" stroke-opacity="0.75" stroke-width="1"/>
<line x1="855.6" y1="220.2" x2="855.6" y2="474.5" stroke="#101012" stroke-opacity="0.75" stroke-width="1"/>
<line x1="907.3" y1="220.2" x2="907.3" y2="474.5" stroke="#101012" stroke-opacity="0.75" stroke-width="1"/>
<line x1="959.0" y1="220.2" x2="959.0" y2="474.5" stroke="#101012" stroke-opacity="0.75" stroke-width="1"/>
<line x1="1010.7" y1="220.2" x2="1010.7" y2="474.5" stroke="#101012" stroke-opacity="0.75" stroke-width="1"/>
<line x1="235.2" y1="251.3" x2="1062.4" y2="251.3" stroke="#0e0e10" stroke-opacity="0.6" stroke-width="1"/>
<line x1="235.2" y1="282.4" x2="1062.4" y2="282.4" stroke="#0e0e10" stroke-opacity="0.6" stroke-width="1"/>
<line x1="235.2" y1="313.5" x2="1062.4" y2="313.5" stroke="#0e0e10" stroke-opacity="0.6" stroke-width="1"/>
<line x1="235.2" y1="344.6" x2="1062.4" y2="344.6" stroke="#0e0e10" stroke-opacity="0.6" stroke-width="1"/>
<line x1="235.2" y1="375.7" x2="1062.4" y2="375.7" stroke="#0e0e10" stroke-opacity="0.6" stroke-width="1"/>
<line x1="235.2" y1="406.8" x2="1062.4" y2="406.8" stroke="#0e0e10" stroke-opacity="0.6" stroke-width="1"/>
<line x1="235.2" y1="437.9" x2="1062.4" y2="437.9" stroke="#0e0e10" stroke-opacity="0.6" stroke-width="1"/>
<line x1="235.2" y1="469.0" x2="1062.4" y2="469.0" stroke="#0e0e10" stroke-opacity="0.6" stroke-width="1"/>
</svg>
<div style="position:absolute;left:1010.7px;top:470.0px;width:51.7px;height:4.5px;background:#3a4888"></div>
<div style="position:absolute;left:235.6px;top:234.8px;width:1.8px;height:1.8px;background:#d8d8ff"></div>
<div style="position:absolute;left:248.0px;top:234.8px;width:1.8px;height:1.8px;background:#d8d8ff"></div>
<div style="position:absolute;left:251.3px;top:234.8px;width:1.8px;height:1.8px;background:#d8d8ff"></div>
<div style="position:absolute;left:257.9px;top:234.8px;width:1.8px;height:1.8px;background:#d8d8ff"></div>
<div style="position:absolute;left:264.1px;top:234.8px;width:1.8px;height:1.8px;background:#d8d8ff"></div>
<div style="position:absolute;left:273.7px;top:234.8px;width:1.8px;height:1.8px;background:#d8d8ff"></div>
<div style="position:absolute;left:277.0px;top:234.8px;width:1.8px;height:1.8px;background:#d8d8ff"></div>
<div style="position:absolute;left:293.1px;top:234.8px;width:1.8px;height:1.8px;background:#d8d8ff"></div>
<div style="position:absolute;left:305.9px;top:234.8px;width:1.8px;height:1.8px;background:#d8d8ff"></div>
<div style="position:absolute;left:318.8px;top:234.8px;width:1.8px;height:1.8px;background:#d8d8ff"></div>
<div style="position:absolute;left:331.6px;top:234.8px;width:1.8px;height:1.8px;background:#d8d8ff"></div>
<div style="position:absolute;left:340px;top:238px;width:47.7px;height:1.8px;background:repeating-linear-gradient(90deg,#e8c8f0 0,#e8c8f0 4.5px,transparent 4.5px,transparent 6.9px)"></div>
<div style="position:absolute;left:391.3px;top:234.6px;width:49.7px;height:3.0px;background:#f4b0dc"></div>
<div style="position:absolute;left:446.0px;top:233.2px;width:1.3px;height:1.3px;background:#f0c8b0"></div>
<div style="position:absolute;left:448.5px;top:234.2px;width:1.3px;height:1.3px;background:#f0c8b0"></div>
<div style="position:absolute;left:455.5px;top:232.8px;width:1.3px;height:1.3px;background:#f0c8b0"></div>
<div style="position:absolute;left:532.7px;top:234.2px;width:1.3px;height:1.3px;background:#f0d0b0"></div>
<div style="position:absolute;left:536.7px;top:234.8px;width:1.3px;height:1.3px;background:#f0d0b0"></div>
<div style="position:absolute;left:237px;top:266px;width:47.7px;height:1.2px;background:repeating-linear-gradient(90deg,rgba(215,215,245,0.75) 0,rgba(215,215,245,0.75) 2px,transparent 2px,transparent 3.3px)"></div>
<div style="position:absolute;left:289px;top:266px;width:47.7px;height:1.2px;background:repeating-linear-gradient(90deg,rgba(215,200,245,0.7) 0,rgba(215,200,245,0.7) 1.2px,transparent 1.2px,transparent 3.3px)"></div>
<div style="position:absolute;left:340px;top:269px;width:47.7px;height:1.8px;background:repeating-linear-gradient(90deg,#e8c8f0 0,#e8c8f0 4.5px,transparent 4.5px,transparent 6.9px)"></div>
<div style="position:absolute;left:391.3px;top:265.6px;width:49.7px;height:3.0px;background:#f4b0dc"></div>
<div style="position:absolute;left:446.0px;top:264.3px;width:1.3px;height:1.3px;background:#f0c8b0"></div>
<div style="position:absolute;left:448.5px;top:265.3px;width:1.3px;height:1.3px;background:#f0c8b0"></div>
<div style="position:absolute;left:455.5px;top:263.8px;width:1.3px;height:1.3px;background:#f0c8b0"></div>
<div style="position:absolute;left:532.7px;top:265.3px;width:1.3px;height:1.3px;background:#f0d0b0"></div>
<div style="position:absolute;left:536.7px;top:265.8px;width:1.3px;height:1.3px;background:#f0d0b0"></div>
<div style="position:absolute;left:237px;top:297px;width:47.7px;height:1.2px;background:repeating-linear-gradient(90deg,rgba(215,215,245,0.75) 0,rgba(215,215,245,0.75) 2px,transparent 2px,transparent 3.3px)"></div>
<div style="position:absolute;left:289px;top:297px;width:47.7px;height:1.2px;background:repeating-linear-gradient(90deg,rgba(215,200,245,0.7) 0,rgba(215,200,245,0.7) 1.2px,transparent 1.2px,transparent 3.3px)"></div>
<div style="position:absolute;left:340px;top:301px;width:47.7px;height:1.8px;background:repeating-linear-gradient(90deg,#e8c8f0 0,#e8c8f0 4.5px,transparent 4.5px,transparent 6.9px)"></div>
<div style="position:absolute;left:391.3px;top:296.8px;width:49.7px;height:3.0px;background:#f4b0dc"></div>
<div style="position:absolute;left:446.0px;top:295.4px;width:1.3px;height:1.3px;background:#f0c8b0"></div>
<div style="position:absolute;left:448.5px;top:296.4px;width:1.3px;height:1.3px;background:#f0c8b0"></div>
<div style="position:absolute;left:455.5px;top:294.9px;width:1.3px;height:1.3px;background:#f0c8b0"></div>
<div style="position:absolute;left:532.7px;top:296.4px;width:1.3px;height:1.3px;background:#f0d0b0"></div>
<div style="position:absolute;left:536.7px;top:296.9px;width:1.3px;height:1.3px;background:#f0d0b0"></div>
<div style="position:absolute;left:237px;top:328px;width:47.7px;height:1.2px;background:repeating-linear-gradient(90deg,rgba(215,215,245,0.75) 0,rgba(215,215,245,0.75) 2px,transparent 2px,transparent 3.3px)"></div>
<div style="position:absolute;left:289px;top:328px;width:47.7px;height:1.2px;background:repeating-linear-gradient(90deg,rgba(215,200,245,0.7) 0,rgba(215,200,245,0.7) 1.2px,transparent 1.2px,transparent 3.3px)"></div>
<div style="position:absolute;left:340px;top:332px;width:47.7px;height:1.8px;background:repeating-linear-gradient(90deg,#e8c8f0 0,#e8c8f0 4.5px,transparent 4.5px,transparent 6.9px)"></div>
<div style="position:absolute;left:391.3px;top:327.9px;width:49.7px;height:3.0px;background:#f4b0dc"></div>
<div style="position:absolute;left:446.0px;top:326.6px;width:1.3px;height:1.3px;background:#f0c8b0"></div>
<div style="position:absolute;left:448.5px;top:327.6px;width:1.3px;height:1.3px;background:#f0c8b0"></div>
<div style="position:absolute;left:455.5px;top:326.1px;width:1.3px;height:1.3px;background:#f0c8b0"></div>
<div style="position:absolute;left:532.7px;top:327.6px;width:1.3px;height:1.3px;background:#f0d0b0"></div>
<div style="position:absolute;left:536.7px;top:328.1px;width:1.3px;height:1.3px;background:#f0d0b0"></div>
<div style="position:absolute;left:237px;top:360px;width:47.7px;height:1.2px;background:repeating-linear-gradient(90deg,rgba(215,215,245,0.75) 0,rgba(215,215,245,0.75) 2px,transparent 2px,transparent 3.3px)"></div>
<div style="position:absolute;left:289px;top:360px;width:47.7px;height:1.2px;background:repeating-linear-gradient(90deg,rgba(215,200,245,0.7) 0,rgba(215,200,245,0.7) 1.2px,transparent 1.2px,transparent 3.3px)"></div>
<div style="position:absolute;left:340px;top:363px;width:47.7px;height:1.8px;background:repeating-linear-gradient(90deg,#e8c8f0 0,#e8c8f0 4.5px,transparent 4.5px,transparent 6.9px)"></div>
<div style="position:absolute;left:391.3px;top:359.0px;width:49.7px;height:3.0px;background:#f4b0dc"></div>
<div style="position:absolute;left:446.0px;top:357.7px;width:1.3px;height:1.3px;background:#f0c8b0"></div>
<div style="position:absolute;left:448.5px;top:358.7px;width:1.3px;height:1.3px;background:#f0c8b0"></div>
<div style="position:absolute;left:455.5px;top:357.2px;width:1.3px;height:1.3px;background:#f0c8b0"></div>
<div style="position:absolute;left:532.7px;top:358.7px;width:1.3px;height:1.3px;background:#f0d0b0"></div>
<div style="position:absolute;left:536.7px;top:359.2px;width:1.3px;height:1.3px;background:#f0d0b0"></div>
<div style="position:absolute;left:237px;top:391px;width:47.7px;height:1.2px;background:repeating-linear-gradient(90deg,rgba(215,215,245,0.75) 0,rgba(215,215,245,0.75) 2px,transparent 2px,transparent 3.3px)"></div>
<div style="position:absolute;left:289px;top:391px;width:47.7px;height:1.2px;background:repeating-linear-gradient(90deg,rgba(215,200,245,0.7) 0,rgba(215,200,245,0.7) 1.2px,transparent 1.2px,transparent 3.3px)"></div>
<div style="position:absolute;left:340px;top:394px;width:47.7px;height:1.8px;background:repeating-linear-gradient(90deg,#e8c8f0 0,#e8c8f0 4.5px,transparent 4.5px,transparent 6.9px)"></div>
<div style="position:absolute;left:391.3px;top:390.1px;width:49.7px;height:3.0px;background:#f4b0dc"></div>
<div style="position:absolute;left:446.0px;top:388.8px;width:1.3px;height:1.3px;background:#f0c8b0"></div>
<div style="position:absolute;left:448.5px;top:389.8px;width:1.3px;height:1.3px;background:#f0c8b0"></div>
<div style="position:absolute;left:455.5px;top:388.2px;width:1.3px;height:1.3px;background:#f0c8b0"></div>
<div style="position:absolute;left:532.7px;top:389.8px;width:1.3px;height:1.3px;background:#f0d0b0"></div>
<div style="position:absolute;left:536.7px;top:390.2px;width:1.3px;height:1.3px;background:#f0d0b0"></div>
<div style="position:absolute;left:237px;top:422px;width:47.7px;height:1.2px;background:repeating-linear-gradient(90deg,rgba(215,215,245,0.75) 0,rgba(215,215,245,0.75) 2px,transparent 2px,transparent 3.3px)"></div>
<div style="position:absolute;left:289px;top:422px;width:47.7px;height:1.2px;background:repeating-linear-gradient(90deg,rgba(215,200,245,0.7) 0,rgba(215,200,245,0.7) 1.2px,transparent 1.2px,transparent 3.3px)"></div>
<div style="position:absolute;left:340px;top:425px;width:47.7px;height:1.8px;background:repeating-linear-gradient(90deg,#e8c8f0 0,#e8c8f0 4.5px,transparent 4.5px,transparent 6.9px)"></div>
<div style="position:absolute;left:391.3px;top:421.2px;width:49.7px;height:3.0px;background:#f4b0dc"></div>
<div style="position:absolute;left:446.0px;top:419.9px;width:1.3px;height:1.3px;background:#f0c8b0"></div>
<div style="position:absolute;left:448.5px;top:420.9px;width:1.3px;height:1.3px;background:#f0c8b0"></div>
<div style="position:absolute;left:455.5px;top:419.4px;width:1.3px;height:1.3px;background:#f0c8b0"></div>
<div style="position:absolute;left:532.7px;top:420.9px;width:1.3px;height:1.3px;background:#f0d0b0"></div>
<div style="position:absolute;left:536.7px;top:421.4px;width:1.3px;height:1.3px;background:#f0d0b0"></div>
<div style="position:absolute;left:237px;top:453px;width:47.7px;height:1.2px;background:repeating-linear-gradient(90deg,rgba(215,215,245,0.75) 0,rgba(215,215,245,0.75) 2px,transparent 2px,transparent 3.3px)"></div>
<div style="position:absolute;left:289px;top:453px;width:47.7px;height:1.2px;background:repeating-linear-gradient(90deg,rgba(215,200,245,0.7) 0,rgba(215,200,245,0.7) 1.2px,transparent 1.2px,transparent 3.3px)"></div>
<div style="position:absolute;left:340px;top:456px;width:47.7px;height:1.8px;background:repeating-linear-gradient(90deg,#e8c8f0 0,#e8c8f0 4.5px,transparent 4.5px,transparent 6.9px)"></div>
<div style="position:absolute;left:391.3px;top:452.2px;width:49.7px;height:3.0px;background:#f4b0dc"></div>
<div style="position:absolute;left:446.0px;top:450.9px;width:1.3px;height:1.3px;background:#f0c8b0"></div>
<div style="position:absolute;left:448.5px;top:451.9px;width:1.3px;height:1.3px;background:#f0c8b0"></div>
<div style="position:absolute;left:455.5px;top:450.4px;width:1.3px;height:1.3px;background:#f0c8b0"></div>
<div style="position:absolute;left:532.7px;top:451.9px;width:1.3px;height:1.3px;background:#f0d0b0"></div>
<div style="position:absolute;left:536.7px;top:452.4px;width:1.3px;height:1.3px;background:#f0d0b0"></div>
<div style="position:absolute;left:546px;top:303px;width:46.7px;height:2px;background:repeating-linear-gradient(90deg,#eadc98 0,#eadc98 4.5px,transparent 4.5px,transparent 7.1px)"></div>
<div style="position:absolute;left:546px;top:334px;width:46.7px;height:2px;background:repeating-linear-gradient(90deg,#eadc98 0,#eadc98 4.5px,transparent 4.5px,transparent 7.1px)"></div>
<div style="position:absolute;left:546px;top:365px;width:46.7px;height:2px;background:repeating-linear-gradient(90deg,#eadc98 0,#eadc98 4.5px,transparent 4.5px,transparent 7.1px)"></div>
<div style="position:absolute;left:546px;top:396px;width:46.7px;height:2px;background:repeating-linear-gradient(90deg,#eadc98 0,#eadc98 4.5px,transparent 4.5px,transparent 7.1px)"></div>
<div style="position:absolute;left:546px;top:427px;width:46.7px;height:2px;background:repeating-linear-gradient(90deg,#eadc98 0,#eadc98 4.5px,transparent 4.5px,transparent 7.1px)"></div>
<div style="position:absolute;left:546px;top:458px;width:46.7px;height:2px;background:repeating-linear-gradient(90deg,#eadc98 0,#eadc98 4.5px,transparent 4.5px,transparent 7.1px)"></div>
<div style="position:absolute;left:599.1px;top:360.7px;width:8px;height:1.6px;background:#f0e6b0"></div>
<div style="position:absolute;left:599.1px;top:391.8px;width:8px;height:1.6px;background:#f0e6b0"></div>
<div style="position:absolute;left:599.1px;top:422.9px;width:8px;height:1.6px;background:#f0e6b0"></div>
<div style="position:absolute;left:599.1px;top:453.9px;width:8px;height:1.6px;background:#f0e6b0"></div>
<div style="position:absolute;left:692.8px;top:390.7px;width:6px;height:1.5px;background:#e8e0a8"></div>
<div style="position:absolute;left:655px;top:422px;width:41.7px;height:1.5px;background:repeating-linear-gradient(90deg,#e8e0a8 0,#e8e0a8 2px,transparent 2px,transparent 19px)"></div>
<div style="position:absolute;left:651px;top:453px;width:47.7px;height:1px;background:repeating-linear-gradient(90deg,#d8d0a0 0,#d8d0a0 1.5px,transparent 1.5px,transparent 4.5px)"></div>
<div style="position:absolute;left:1062.4px;top:220.2px;width:50.6px;height:30.3px;background:#ffffff"></div>
<div style="position:absolute;left:1062.4px;top:220.2px;width:7.0px;height:30.3px;background:#bdbdbd"></div>
<div style="position:absolute;left:1062.4px;top:250.5px;width:50.6px;height:0.8px;background:#8c8c8c"></div>
<div class="t" style="left:1067.9px;top:224.7px;font-size:9.5px;color:#4e4e4e">1</div>
<div style="position:absolute;left:1093.0px;top:239.3px;width:20.0px;height:11.2px;background:#8a8a8a"></div>
<div class="t" style="left:1002.8px;top:235.0px;width:200px;height:20px;line-height:20px;text-align:center;font-size:10px;color:#f0f0f0;font-weight:normal;"><span style="display:inline-block;transform:scaleX(0.85);transform-origin:center;letter-spacing:0px">NE</span></div>
<div style="position:absolute;left:1062.4px;top:251.3px;width:50.6px;height:30.3px;background:#d9d9d9"></div>
<div style="position:absolute;left:1062.4px;top:281.6px;width:50.6px;height:0.8px;background:#8c8c8c"></div>
<div class="t" style="left:1067.9px;top:255.8px;font-size:9.5px;color:#4e4e4e">2</div>
<div style="position:absolute;left:1093.0px;top:270.4px;width:20.0px;height:11.2px;background:#8a8a8a"></div>
<div class="t" style="left:1002.8px;top:266.1px;width:200px;height:20px;line-height:20px;text-align:center;font-size:10px;color:#f0f0f0;font-weight:normal;"><span style="display:inline-block;transform:scaleX(0.85);transform-origin:center;letter-spacing:0px">NE</span></div>
<div style="position:absolute;left:1062.4px;top:282.4px;width:50.6px;height:30.3px;background:#d9d9d9"></div>
<div style="position:absolute;left:1062.4px;top:312.7px;width:50.6px;height:0.8px;background:#8c8c8c"></div>
<div class="t" style="left:1067.9px;top:286.9px;font-size:9.5px;color:#4e4e4e">3</div>
<div style="position:absolute;left:1093.0px;top:301.5px;width:20.0px;height:11.2px;background:#8a8a8a"></div>
<div class="t" style="left:1002.8px;top:297.2px;width:200px;height:20px;line-height:20px;text-align:center;font-size:10px;color:#f0f0f0;font-weight:normal;"><span style="display:inline-block;transform:scaleX(0.85);transform-origin:center;letter-spacing:0px">NE</span></div>
<div style="position:absolute;left:1062.4px;top:313.5px;width:50.6px;height:30.3px;background:#d9d9d9"></div>
<div style="position:absolute;left:1062.4px;top:343.8px;width:50.6px;height:0.8px;background:#8c8c8c"></div>
<div class="t" style="left:1067.9px;top:318.0px;font-size:9.5px;color:#4e4e4e">4</div>
<div style="position:absolute;left:1093.0px;top:332.6px;width:20.0px;height:11.2px;background:#8a8a8a"></div>
<div class="t" style="left:1002.8px;top:328.3px;width:200px;height:20px;line-height:20px;text-align:center;font-size:10px;color:#f0f0f0;font-weight:normal;"><span style="display:inline-block;transform:scaleX(0.85);transform-origin:center;letter-spacing:0px">NE</span></div>
<div style="position:absolute;left:1062.4px;top:344.6px;width:50.6px;height:30.3px;background:#d9d9d9"></div>
<div style="position:absolute;left:1062.4px;top:374.9px;width:50.6px;height:0.8px;background:#8c8c8c"></div>
<div class="t" style="left:1067.9px;top:349.1px;font-size:9.5px;color:#4e4e4e">5</div>
<div style="position:absolute;left:1093.0px;top:363.7px;width:20.0px;height:11.2px;background:#8a8a8a"></div>
<div class="t" style="left:1002.8px;top:359.4px;width:200px;height:20px;line-height:20px;text-align:center;font-size:10px;color:#f0f0f0;font-weight:normal;"><span style="display:inline-block;transform:scaleX(0.85);transform-origin:center;letter-spacing:0px">NE</span></div>
<div style="position:absolute;left:1062.4px;top:375.7px;width:50.6px;height:30.3px;background:#d9d9d9"></div>
<div style="position:absolute;left:1062.4px;top:406.0px;width:50.6px;height:0.8px;background:#8c8c8c"></div>
<div class="t" style="left:1067.9px;top:380.2px;font-size:9.5px;color:#4e4e4e">6</div>
<div style="position:absolute;left:1093.0px;top:394.8px;width:20.0px;height:11.2px;background:#8a8a8a"></div>
<div class="t" style="left:1002.8px;top:390.5px;width:200px;height:20px;line-height:20px;text-align:center;font-size:10px;color:#f0f0f0;font-weight:normal;"><span style="display:inline-block;transform:scaleX(0.85);transform-origin:center;letter-spacing:0px">NE</span></div>
<div style="position:absolute;left:1062.4px;top:406.8px;width:50.6px;height:30.3px;background:#d9d9d9"></div>
<div style="position:absolute;left:1062.4px;top:437.1px;width:50.6px;height:0.8px;background:#8c8c8c"></div>
<div class="t" style="left:1067.9px;top:411.3px;font-size:9.5px;color:#4e4e4e">7</div>
<div style="position:absolute;left:1093.0px;top:425.9px;width:20.0px;height:11.2px;background:#8a8a8a"></div>
<div class="t" style="left:1002.8px;top:421.6px;width:200px;height:20px;line-height:20px;text-align:center;font-size:10px;color:#f0f0f0;font-weight:normal;"><span style="display:inline-block;transform:scaleX(0.85);transform-origin:center;letter-spacing:0px">NE</span></div>
<div style="position:absolute;left:1062.4px;top:437.9px;width:50.6px;height:30.3px;background:#d9d9d9"></div>
<div style="position:absolute;left:1062.4px;top:468.2px;width:50.6px;height:0.8px;background:#8c8c8c"></div>
<div class="t" style="left:1067.9px;top:442.4px;font-size:9.5px;color:#4e4e4e">8</div>
<div style="position:absolute;left:1093.0px;top:457.0px;width:20.0px;height:11.2px;background:#8a8a8a"></div>
<div class="t" style="left:1002.8px;top:452.7px;width:200px;height:20px;line-height:20px;text-align:center;font-size:10px;color:#f0f0f0;font-weight:normal;"><span style="display:inline-block;transform:scaleX(0.85);transform-origin:center;letter-spacing:0px">NE</span></div>
<div style="position:absolute;left:1062.4px;top:469.0px;width:50.6px;height:5.5px;background:#d9d9d9"></div>
<div style="position:absolute;left:1062.4px;top:472.0px;width:50.6px;height:1.0px;background:#a0a0a0"></div>
<div style="position:absolute;left:235.2px;top:474.5px;width:877.8px;height:20.7px;background:#e3e3e3"></div>
<div style="position:absolute;left:257.6px;top:481.5px;width:6px;height:6px;border:1px solid #c2c2c2"></div>
<div style="position:absolute;left:286.2px;top:474.5px;width:1.4px;height:20.7px;background:#5a5a5c"></div>
<div style="position:absolute;left:309.2px;top:481.5px;width:6px;height:6px;border:1px solid #c2c2c2"></div>
<div style="position:absolute;left:337.9px;top:474.5px;width:1.4px;height:20.7px;background:#5a5a5c"></div>
<div style="position:absolute;left:361.0px;top:481.5px;width:6px;height:6px;border:1px solid #c2c2c2"></div>
<div style="position:absolute;left:389.6px;top:474.5px;width:1.4px;height:20.7px;background:#5a5a5c"></div>
<div style="position:absolute;left:412.7px;top:481.5px;width:6px;height:6px;border:1px solid #c2c2c2"></div>
<div style="position:absolute;left:441.3px;top:474.5px;width:1.4px;height:20.7px;background:#5a5a5c"></div>
<div style="position:absolute;left:464.4px;top:481.5px;width:6px;height:6px;border:1px solid #c2c2c2"></div>
<div style="position:absolute;left:493.0px;top:474.5px;width:1.4px;height:20.7px;background:#5a5a5c"></div>
<div style="position:absolute;left:516.0px;top:481.5px;width:6px;height:6px;border:1px solid #c2c2c2"></div>
<div style="position:absolute;left:544.7px;top:474.5px;width:1.4px;height:20.7px;background:#5a5a5c"></div>
<div style="position:absolute;left:567.8px;top:481.5px;width:6px;height:6px;border:1px solid #c2c2c2"></div>
<div style="position:absolute;left:596.4px;top:474.5px;width:1.4px;height:20.7px;background:#5a5a5c"></div>
<div style="position:absolute;left:619.5px;top:481.5px;width:6px;height:6px;border:1px solid #c2c2c2"></div>
<div style="position:absolute;left:648.1px;top:474.5px;width:1.4px;height:20.7px;background:#5a5a5c"></div>
<div style="position:absolute;left:671.1px;top:481.5px;width:6px;height:6px;border:1px solid #c2c2c2"></div>
<div style="position:absolute;left:699.8px;top:474.5px;width:1.4px;height:20.7px;background:#5a5a5c"></div>
<div style="position:absolute;left:722.9px;top:481.5px;width:6px;height:6px;border:1px solid #c2c2c2"></div>
<div style="position:absolute;left:751.5px;top:474.5px;width:1.4px;height:20.7px;background:#5a5a5c"></div>
<div style="position:absolute;left:774.6px;top:481.5px;width:6px;height:6px;border:1px solid #c2c2c2"></div>
<div style="position:absolute;left:803.2px;top:474.5px;width:1.4px;height:20.7px;background:#5a5a5c"></div>
<div style="position:absolute;left:826.3px;top:481.5px;width:6px;height:6px;border:1px solid #c2c2c2"></div>
<div style="position:absolute;left:854.9px;top:474.5px;width:1.4px;height:20.7px;background:#5a5a5c"></div>
<div style="position:absolute;left:878.0px;top:481.5px;width:6px;height:6px;border:1px solid #c2c2c2"></div>
<div style="position:absolute;left:906.6px;top:474.5px;width:1.4px;height:20.7px;background:#5a5a5c"></div>
<div style="position:absolute;left:929.6px;top:481.5px;width:6px;height:6px;border:1px solid #c2c2c2"></div>
<div style="position:absolute;left:958.3px;top:474.5px;width:1.4px;height:20.7px;background:#5a5a5c"></div>
<div style="position:absolute;left:981.4px;top:481.5px;width:6px;height:6px;border:1px solid #c2c2c2"></div>
<div style="position:absolute;left:1010.0px;top:474.5px;width:1.4px;height:20.7px;background:#5a5a5c"></div>
<div style="position:absolute;left:1033.0px;top:481.5px;width:6px;height:6px;border:1px solid #c2c2c2"></div>
<div style="position:absolute;left:1061.7px;top:474.5px;width:1.4px;height:20.7px;background:#5a5a5c"></div>
<div style="position:absolute;left:1084.8px;top:481.5px;width:6px;height:6px;border:1px solid #c2c2c2"></div>
<div style="position:absolute;left:235.2px;top:495.2px;width:877.8px;height:25.8px;background:#161618"></div>
<div style="position:absolute;left:235.2px;top:496.6px;width:50.9px;height:24.0px;background:#5b5be2"></div>
<div class="t" style="left:161.1px;top:496.5px;width:200px;height:25.0px;line-height:25.0px;text-align:center;font-size:12.5px;color:#eeeeff;font-weight:normal;"><span style="display:inline-block;transform:scaleX(0.85);transform-origin:center;letter-spacing:0px">1</span></div>
<div style="position:absolute;left:287.7px;top:496.6px;width:50.1px;height:24.0px;background:#404043"></div>
<div class="t" style="left:212.8px;top:496.5px;width:200px;height:25.0px;line-height:25.0px;text-align:center;font-size:12.5px;color:#dcdcde;font-weight:normal;"><span style="display:inline-block;transform:scaleX(0.85);transform-origin:center;letter-spacing:0px">2</span></div>
<div style="position:absolute;left:339.4px;top:496.6px;width:50.1px;height:24.0px;background:#404043"></div>
<div class="t" style="left:264.5px;top:496.5px;width:200px;height:25.0px;line-height:25.0px;text-align:center;font-size:12.5px;color:#dcdcde;font-weight:normal;"><span style="display:inline-block;transform:scaleX(0.85);transform-origin:center;letter-spacing:0px">3</span></div>
<div style="position:absolute;left:391.1px;top:496.6px;width:50.1px;height:24.0px;background:#404043"></div>
<div class="t" style="left:316.2px;top:496.5px;width:200px;height:25.0px;line-height:25.0px;text-align:center;font-size:12.5px;color:#dcdcde;font-weight:normal;"><span style="display:inline-block;transform:scaleX(0.85);transform-origin:center;letter-spacing:0px">4</span></div>
<div style="position:absolute;left:442.8px;top:496.6px;width:50.1px;height:24.0px;background:#404043"></div>
<div class="t" style="left:367.9px;top:496.5px;width:200px;height:25.0px;line-height:25.0px;text-align:center;font-size:12.5px;color:#dcdcde;font-weight:normal;"><span style="display:inline-block;transform:scaleX(0.85);transform-origin:center;letter-spacing:0px">5</span></div>
<div style="position:absolute;left:494.5px;top:496.6px;width:50.1px;height:24.0px;background:#404043"></div>
<div class="t" style="left:419.5px;top:496.5px;width:200px;height:25.0px;line-height:25.0px;text-align:center;font-size:12.5px;color:#dcdcde;font-weight:normal;"><span style="display:inline-block;transform:scaleX(0.85);transform-origin:center;letter-spacing:0px">6</span></div>
<div style="position:absolute;left:546.2px;top:496.6px;width:50.1px;height:24.0px;background:#404043"></div>
<div class="t" style="left:471.3px;top:496.5px;width:200px;height:25.0px;line-height:25.0px;text-align:center;font-size:12.5px;color:#dcdcde;font-weight:normal;"><span style="display:inline-block;transform:scaleX(0.85);transform-origin:center;letter-spacing:0px">7</span></div>
<div style="position:absolute;left:597.9px;top:496.6px;width:50.1px;height:24.0px;background:#404043"></div>
<div class="t" style="left:523.0px;top:496.5px;width:200px;height:25.0px;line-height:25.0px;text-align:center;font-size:12.5px;color:#dcdcde;font-weight:normal;"><span style="display:inline-block;transform:scaleX(0.85);transform-origin:center;letter-spacing:0px">8</span></div>
<div style="position:absolute;left:649.6px;top:496.6px;width:50.1px;height:24.0px;background:#404043"></div>
<div class="t" style="left:574.6px;top:496.5px;width:200px;height:25.0px;line-height:25.0px;text-align:center;font-size:12.5px;color:#dcdcde;font-weight:normal;"><span style="display:inline-block;transform:scaleX(0.85);transform-origin:center;letter-spacing:0px">9</span></div>
<div style="position:absolute;left:701.3px;top:496.6px;width:50.1px;height:24.0px;background:#404043"></div>
<div class="t" style="left:626.4px;top:496.5px;width:200px;height:25.0px;line-height:25.0px;text-align:center;font-size:12.5px;color:#dcdcde;font-weight:normal;"><span style="display:inline-block;transform:scaleX(0.85);transform-origin:center;letter-spacing:0px">10</span></div>
<div style="position:absolute;left:753.0px;top:496.6px;width:50.1px;height:24.0px;background:#404043"></div>
<div class="t" style="left:678.1px;top:496.5px;width:200px;height:25.0px;line-height:25.0px;text-align:center;font-size:12.5px;color:#dcdcde;font-weight:normal;"><span style="display:inline-block;transform:scaleX(0.85);transform-origin:center;letter-spacing:0px">11</span></div>
<div style="position:absolute;left:804.7px;top:496.6px;width:50.1px;height:24.0px;background:#404043"></div>
<div class="t" style="left:729.8px;top:496.5px;width:200px;height:25.0px;line-height:25.0px;text-align:center;font-size:12.5px;color:#dcdcde;font-weight:normal;"><span style="display:inline-block;transform:scaleX(0.85);transform-origin:center;letter-spacing:0px">12</span></div>
<div style="position:absolute;left:856.4px;top:496.6px;width:50.1px;height:24.0px;background:#404043"></div>
<div class="t" style="left:781.5px;top:496.5px;width:200px;height:25.0px;line-height:25.0px;text-align:center;font-size:12.5px;color:#dcdcde;font-weight:normal;"><span style="display:inline-block;transform:scaleX(0.85);transform-origin:center;letter-spacing:0px">13</span></div>
<div style="position:absolute;left:908.1px;top:496.6px;width:50.1px;height:24.0px;background:#404043"></div>
<div class="t" style="left:833.1px;top:496.5px;width:200px;height:25.0px;line-height:25.0px;text-align:center;font-size:12.5px;color:#dcdcde;font-weight:normal;"><span style="display:inline-block;transform:scaleX(0.85);transform-origin:center;letter-spacing:0px">14</span></div>
<div style="position:absolute;left:959.8px;top:496.6px;width:50.1px;height:24.0px;background:#404043"></div>
<div class="t" style="left:884.9px;top:496.5px;width:200px;height:25.0px;line-height:25.0px;text-align:center;font-size:12.5px;color:#dcdcde;font-weight:normal;"><span style="display:inline-block;transform:scaleX(0.85);transform-origin:center;letter-spacing:0px">15</span></div>
<div style="position:absolute;left:1011.5px;top:496.6px;width:50.1px;height:24.0px;background:#404043"></div>
<div class="t" style="left:936.5px;top:496.5px;width:200px;height:25.0px;line-height:25.0px;text-align:center;font-size:12.5px;color:#dcdcde;font-weight:normal;"><span style="display:inline-block;transform:scaleX(0.85);transform-origin:center;letter-spacing:0px">16</span></div>
<div style="position:absolute;left:1063.2px;top:496.6px;width:49.8px;height:24.0px;background:#404043"></div>
<div class="t" style="left:988.2px;top:496.5px;width:200px;height:25.0px;line-height:25.0px;text-align:center;font-size:12.5px;color:#dcdcde;font-weight:normal;"><span style="display:inline-block;transform:scaleX(0.85);transform-origin:center;letter-spacing:0px">M</span></div>
<div style="position:absolute;left:235.2px;top:521.0px;width:827.2px;height:115.0px;background:#141416"></div>
<div style="position:absolute;left:235.7px;top:522.2px;width:102.4px;height:58.8px;background:linear-gradient(180deg,#26262a 0%,#1f1f22 45%,#19191b 100%);border-radius:2px;box-shadow:inset 0 0 0 1px #5e2222"></div>
<div class="t" style="left:241.2px;top:522.0px;width:200px;height:18px;line-height:18px;text-align:left;font-size:9px;color:#d2d2d6;font-weight:bold;"><span style="display:inline-block;transform:scaleX(0.73);transform-origin:left;letter-spacing:0px">1 - KICK TROPICALIA</span></div>
<div style="position:absolute;left:241.2px;top:551.4px;width:91.4px;height:1px;background:#30305a"></div>
<div style="position:absolute;left:235.7px;top:583.0px;width:102.4px;height:53.0px;background:linear-gradient(180deg,#26262a 0%,#1f1f22 45%,#19191b 100%);border-radius:2px"></div>
<div class="t" style="left:241.2px;top:582.8px;width:200px;height:18px;line-height:18px;text-align:left;font-size:9px;color:#d2d2d6;font-weight:bold;"><span style="display:inline-block;transform:scaleX(0.73);transform-origin:left;letter-spacing:0px">2 - SNARE TROPICALIA</span></div>
<div style="position:absolute;left:241.2px;top:612.2px;width:91.4px;height:1px;background:#323246"></div>
<div style="position:absolute;left:339.1px;top:522.2px;width:102.4px;height:58.8px;background:linear-gradient(180deg,#26262a 0%,#1f1f22 45%,#19191b 100%);border-radius:2px"></div>
<div class="t" style="left:344.6px;top:522.0px;width:200px;height:18px;line-height:18px;text-align:left;font-size:9px;color:#d2d2d6;font-weight:bold;"><span style="display:inline-block;transform:scaleX(0.73);transform-origin:left;letter-spacing:0px">3 - 08 HI-HAT</span></div>
<div style="position:absolute;left:344.6px;top:551.4px;width:91.4px;height:1px;background:#343438"></div>
<div style="position:absolute;left:339.1px;top:583.0px;width:102.4px;height:53.0px;background:linear-gradient(180deg,#26262a 0%,#1f1f22 45%,#19191b 100%);border-radius:2px"></div>
<div class="t" style="left:344.6px;top:582.8px;width:200px;height:18px;line-height:18px;text-align:left;font-size:9px;color:#d2d2d6;font-weight:bold;"><span style="display:inline-block;transform:scaleX(0.73);transform-origin:left;letter-spacing:0px">4 - OSCILLATOR</span></div>
<div style="position:absolute;left:344.6px;top:612.2px;width:91.4px;height:1px;background:transparent"></div>
<div style="position:absolute;left:442.5px;top:522.2px;width:102.4px;height:58.8px;background:linear-gradient(180deg,#26262a 0%,#1f1f22 45%,#19191b 100%);border-radius:2px"></div>
<div class="t" style="left:448.0px;top:522.0px;width:200px;height:18px;line-height:18px;text-align:left;font-size:9px;color:#d2d2d6;font-weight:bold;"><span style="display:inline-block;transform:scaleX(0.73);transform-origin:left;letter-spacing:0px">5 - OSCILLATOR</span></div>
<div style="position:absolute;left:448.0px;top:551.4px;width:91.4px;height:1px;background:#552828"></div>
<div style="position:absolute;left:442.5px;top:583.0px;width:102.4px;height:53.0px;background:linear-gradient(180deg,#26262a 0%,#1f1f22 45%,#19191b 100%);border-radius:2px"></div>
<div class="t" style="left:448.0px;top:582.8px;width:200px;height:18px;line-height:18px;text-align:left;font-size:9px;color:#d2d2d6;font-weight:bold;"><span style="display:inline-block;transform:scaleX(0.73);transform-origin:left;letter-spacing:0px">6 - OSCILLATOR</span></div>
<div style="position:absolute;left:448.0px;top:612.2px;width:91.4px;height:1px;background:#363638"></div>
<div style="position:absolute;left:545.9px;top:522.2px;width:102.4px;height:58.8px;background:linear-gradient(180deg,#26262a 0%,#1f1f22 45%,#19191b 100%);border-radius:2px"></div>
<div class="t" style="left:551.4px;top:522.0px;width:200px;height:18px;line-height:18px;text-align:left;font-size:9px;color:#d2d2d6;font-weight:bold;"><span style="display:inline-block;transform:scaleX(0.73);transform-origin:left;letter-spacing:0px">7 - OSCILLATOR</span></div>
<div style="position:absolute;left:551.4px;top:551.4px;width:91.4px;height:1px;background:#3f3f34"></div>
<div style="position:absolute;left:545.9px;top:583.0px;width:102.4px;height:53.0px;background:linear-gradient(180deg,#26262a 0%,#1f1f22 45%,#19191b 100%);border-radius:2px"></div>
<div class="t" style="left:551.4px;top:582.8px;width:200px;height:18px;line-height:18px;text-align:left;font-size:9px;color:#d2d2d6;font-weight:bold;"><span style="display:inline-block;transform:scaleX(0.73);transform-origin:left;letter-spacing:0px">8 - OSCILLATOR</span></div>
<div style="position:absolute;left:551.4px;top:612.2px;width:91.4px;height:1px;background:#383834"></div>
<div style="position:absolute;left:649.3px;top:522.2px;width:102.4px;height:58.8px;background:linear-gradient(180deg,#26262a 0%,#1f1f22 45%,#19191b 100%);border-radius:2px"></div>
<div class="t" style="left:654.8px;top:522.0px;width:200px;height:18px;line-height:18px;text-align:left;font-size:9px;color:#d2d2d6;font-weight:bold;"><span style="display:inline-block;transform:scaleX(0.73);transform-origin:left;letter-spacing:0px">9 - OSCILLATOR</span></div>
<div style="position:absolute;left:654.8px;top:551.4px;width:91.4px;height:1px;background:#3f3f34"></div>
<div style="position:absolute;left:649.3px;top:583.0px;width:102.4px;height:53.0px;background:linear-gradient(180deg,#26262a 0%,#1f1f22 45%,#19191b 100%);border-radius:2px"></div>
<div class="t" style="left:654.8px;top:582.8px;width:200px;height:18px;line-height:18px;text-align:left;font-size:9px;color:#d2d2d6;font-weight:bold;"><span style="display:inline-block;transform:scaleX(0.73);transform-origin:left;letter-spacing:0px">10 - METAL RAIL HAND S...</span></div>
<div style="position:absolute;left:654.8px;top:612.2px;width:91.4px;height:1px;background:#363638"></div>
<div style="position:absolute;left:752.7px;top:522.2px;width:102.4px;height:58.8px;background:linear-gradient(180deg,#26262a 0%,#1f1f22 45%,#19191b 100%);border-radius:2px"></div>
<div class="t" style="left:758.2px;top:522.0px;width:200px;height:18px;line-height:18px;text-align:left;font-size:9px;color:#d2d2d6;font-weight:bold;"><span style="display:inline-block;transform:scaleX(0.73);transform-origin:left;letter-spacing:0px">11 - OSCILLATOR</span></div>
<div style="position:absolute;left:758.2px;top:551.4px;width:91.4px;height:1px;background:#403e30"></div>
<div style="position:absolute;left:752.7px;top:583.0px;width:102.4px;height:53.0px;background:linear-gradient(180deg,#26262a 0%,#1f1f22 45%,#19191b 100%);border-radius:2px"></div>
<div class="t" style="left:758.2px;top:582.8px;width:200px;height:18px;line-height:18px;text-align:left;font-size:9px;color:#d2d2d6;font-weight:bold;"><span style="display:inline-block;transform:scaleX(0.73);transform-origin:left;letter-spacing:0px">12 - OSCILLATOR</span></div>
<div style="position:absolute;left:758.2px;top:612.2px;width:91.4px;height:1px;background:#363638"></div>
<div style="position:absolute;left:856.1px;top:522.2px;width:102.4px;height:58.8px;background:linear-gradient(180deg,#26262a 0%,#1f1f22 45%,#19191b 100%);border-radius:2px"></div>
<div class="t" style="left:861.6px;top:522.0px;width:200px;height:18px;line-height:18px;text-align:left;font-size:9px;color:#d2d2d6;font-weight:bold;"><span style="display:inline-block;transform:scaleX(0.73);transform-origin:left;letter-spacing:0px">13 - OSCILLATOR</span></div>
<div style="position:absolute;left:861.6px;top:551.4px;width:91.4px;height:1px;background:#284c40"></div>
<div style="position:absolute;left:856.1px;top:583.0px;width:102.4px;height:53.0px;background:linear-gradient(180deg,#26262a 0%,#1f1f22 45%,#19191b 100%);border-radius:2px"></div>
<div class="t" style="left:861.6px;top:582.8px;width:200px;height:18px;line-height:18px;text-align:left;font-size:9px;color:#d2d2d6;font-weight:bold;"><span style="display:inline-block;transform:scaleX(0.73);transform-origin:left;letter-spacing:0px">14 - OSCILLATOR</span></div>
<div style="position:absolute;left:861.6px;top:612.2px;width:91.4px;height:1px;background:#363638"></div>
<div style="position:absolute;left:959.5px;top:522.2px;width:102.4px;height:58.8px;background:linear-gradient(180deg,#26262a 0%,#1f1f22 45%,#19191b 100%);border-radius:2px"></div>
<div class="t" style="left:965.0px;top:522.0px;width:200px;height:18px;line-height:18px;text-align:left;font-size:9px;color:#d2d2d6;font-weight:bold;"><span style="display:inline-block;transform:scaleX(0.73);transform-origin:left;letter-spacing:0px">15 - NONE</span></div>
<div style="position:absolute;left:965.0px;top:551.4px;width:91.4px;height:1px;background:#343438"></div>
<div style="position:absolute;left:959.5px;top:583.0px;width:102.4px;height:53.0px;background:linear-gradient(180deg,#26262a 0%,#1f1f22 45%,#19191b 100%);border-radius:2px"></div>
<div class="t" style="left:965.0px;top:582.8px;width:200px;height:18px;line-height:18px;text-align:left;font-size:9px;color:#d2d2d6;font-weight:bold;"><span style="display:inline-block;transform:scaleX(0.73);transform-origin:left;letter-spacing:0px">16 - 16INCH CRASH SABIA...</span></div>
<div style="position:absolute;left:965.0px;top:612.2px;width:91.4px;height:1px;background:#303062"></div>
<svg width="1280" height="700" style="position:absolute;left:0;top:0"><polyline points="344.6,612.7 347.1,613.4 349.6,613.3 352.1,613.6 354.6,613.5 357.1,612.5 359.6,612.1 362.1,612.6 364.6,611.4 367.1,611.0 369.6,611.6 372.1,610.9 374.6,611.3 377.1,611.1 379.6,611.6 382.1,611.4 384.6,612.5 387.1,613.2 389.6,613.2 392.1,613.7 394.6,613.7 397.1,612.9 399.6,613.5 402.1,613.0 404.6,612.2 407.1,611.4 409.6,612.0 412.1,611.2 414.6,611.2 417.1,611.4 419.6,611.2 422.1,611.7 424.6,611.5 427.1,612.4 429.6,612.4 432.1,613.4 434.6,613.7" fill="none" stroke="#5a2a3a" stroke-width="1.1"/></svg>
<div style="position:absolute;left:1062.4px;top:521.0px;width:50.1px;height:115.0px;background:#2b2b2f"></div>
<div style="position:absolute;left:1067.2px;top:526.5px;width:40.8px;height:22.9px;background:linear-gradient(180deg,#4e4e52,#3e3e42);border-radius:4px;box-shadow:0 1px 1px #151517"></div>
<div class="t" style="left:987.6px;top:528.0px;width:200px;height:21.0px;line-height:21.0px;text-align:center;font-size:10.5px;color:#e2e2e6;font-weight:normal;"><span style="display:inline-block;transform:scaleX(0.8);transform-origin:center;letter-spacing:0px">KBD</span></div>
<div style="position:absolute;left:1067.2px;top:555.9px;width:40.8px;height:21.9px;background:linear-gradient(180deg,#4e4e52,#3e3e42);border-radius:4px;box-shadow:0 1px 1px #151517"></div>
<div class="t" style="left:987.6px;top:556.8px;width:200px;height:21.0px;line-height:21.0px;text-align:center;font-size:10.5px;color:#e2e2e6;font-weight:normal;"><span style="display:inline-block;transform:scaleX(0.8);transform-origin:center;letter-spacing:0px">SOLO</span></div>
<div style="position:absolute;left:1067.2px;top:585.2px;width:40.8px;height:21.2px;background:linear-gradient(180deg,#4e4e52,#3e3e42);border-radius:4px;box-shadow:0 1px 1px #151517"></div>
<div class="t" style="left:987.6px;top:585.8px;width:200px;height:21.0px;line-height:21.0px;text-align:center;font-size:10.5px;color:#e2e2e6;font-weight:normal;"><span style="display:inline-block;transform:scaleX(0.8);transform-origin:center;letter-spacing:0px">MUTE</span></div>
<div style="position:absolute;left:1067.2px;top:613.8px;width:40.8px;height:22.2px;background:linear-gradient(180deg,#4e4e52,#3e3e42);border-radius:4px;box-shadow:0 1px 1px #151517"></div>
<div class="t" style="left:987.6px;top:614.9px;width:200px;height:21.0px;line-height:21.0px;text-align:center;font-size:10.5px;color:#e2e2e6;font-weight:normal;"><span style="display:inline-block;transform:scaleX(0.8);transform-origin:center;letter-spacing:0px">ARM</span></div>
<svg width="1280" height="700" style="position:absolute;left:0;top:0">
<rect x="195" y="237.5" width="34.2" height="34.3" rx="4" fill="#fafafa"/>
<g fill="none" stroke="#4a4a4a" stroke-width="1.4">
<rect x="204" y="246.5" width="4" height="4" rx="0.8"/><rect x="210.3" y="246.5" width="4" height="4" rx="0.8"/><rect x="216.6" y="246.5" width="4" height="4" rx="0.8"/>
<rect x="204" y="252.8" width="4" height="4" rx="0.8"/><rect x="210.3" y="252.8" width="4" height="4" rx="0.8"/><rect x="216.6" y="252.8" width="4" height="4" rx="0.8"/>
<rect x="204" y="259.1" width="4" height="4" rx="0.8"/><rect x="210.3" y="259.1" width="4" height="4" rx="0.8"/><rect x="216.6" y="259.1" width="4" height="4" rx="0.8"/>
</g>
<g fill="none" stroke="#c8c8c8" stroke-width="1.2">
<rect x="203.5" y="294" width="17" height="4.2" rx="1"/>
<rect x="203.5" y="300.5" width="17" height="4.2" rx="1"/>
<rect x="203.5" y="307" width="17" height="4.2" rx="1"/>
<line x1="209" y1="294" x2="209" y2="311"/><line x1="215" y1="294" x2="215" y2="311"/>
</g>
<g fill="none" stroke="#cfcfcf" stroke-width="1.3">
<line x1="201.4" y1="351.2" x2="222.2" y2="351.2" stroke-width="1.6"/>
<rect x="204.4" y="346.6" width="5" height="4.6"/>
<rect x="214.4" y="342.4" width="5.6" height="8.8"/>
<rect x="209.6" y="351.2" width="4.8" height="7.8"/>
</g>
<circle cx="216.8" cy="348.2" r="0.9" fill="#e0e0e0"/><circle cx="211.9" cy="354.2" r="0.8" fill="#e0e0e0"/><circle cx="211.9" cy="355.8" r="0.8" fill="#e0e0e0"/>
<g fill="none" stroke="#cfcfcf" stroke-width="1.3">
<rect x="204.2" y="390.3" width="15.6" height="17"/>
<path d="M204.2,395.3 H211.6 Q212.6,395.3 212.6,396.3 V401.3 Q212.6,402.3 211.6,402.3 H204.2"/>
<line x1="204.2" y1="398.8" x2="212.6" y2="398.8" stroke="#9a9a9a"/>
<line x1="212.6" y1="395.6" x2="219.8" y2="395.6" stroke-width="0.9"/>
<line x1="212.6" y1="402" x2="219.8" y2="402" stroke-width="0.9"/>
</g>
<g fill="none" stroke="#c8c8c8" stroke-width="1.2">
<line x1="206" y1="438" x2="206" y2="456.5"/><line x1="212" y1="438" x2="212" y2="456.5"/><line x1="218" y1="438" x2="218" y2="456.5"/>
<circle cx="206" cy="441.5" r="2" fill="#1f1f22"/><circle cx="212" cy="450" r="2" fill="#1f1f22"/><circle cx="218" cy="444" r="2" fill="#1f1f22"/>
</g>
</svg>
<svg width="1280" height="700" style="position:absolute;left:0;top:0">
<defs><clipPath id="lc"><rect x="175.8" y="557.8" width="69.2" height="69.8" rx="7.5"/></clipPath>
<filter id="lsh" x="-20%" y="-20%" width="140%" height="140%"><feGaussianBlur stdDeviation="1"/></filter></defs>
<rect x="174.2" y="556.2" width="72.6" height="73.2" rx="9.5" fill="#050505"/>
<rect x="175.8" y="557.8" width="69.2" height="69.8" rx="7.5" fill="#5070f0"/>
<g clip-path="url(#lc)">
<path d="M183.8,568.3 L193,563.7 L211,573.5 L211,587.4 L194.1,597.2 L194.1,608.5 L183.8,602.8 Z" fill="#0a0a30" opacity="0.75" transform="translate(-1.6,1.6)" filter="url(#lsh)"/>
<path d="M194.1,575 L204.9,580.7 L194.1,586.3 Z" fill="#4a68e8"/>
<path d="M183.8,568.3 L193,563.7 L211,573.5 L211,587.4 L194.1,597.2 L194.1,608.5 L183.8,602.8 Z M194.1,575 L204.9,580.7 L194.1,586.3 Z" fill="#ffffff" fill-rule="evenodd"/>
<path d="M183.8,592.3 L194.1,586.6 L204.9,580.9" fill="none" stroke="#111" stroke-width="1.3"/>
<path d="M194.1,575.3 L204.9,580.9" fill="none" stroke="#222" stroke-width="0.8" opacity="0.6"/>
<g fill="none" stroke="#ffffff" stroke-width="3.1" stroke-linejoin="miter">
<path d="M221.4,583.7 L242.1,595.1 L232.5,600.9 L213.9,588.7 L203.9,594.8 L203.9,617.6 L213.9,623.7 L232.5,612.8"/>
<path d="M220.7,594.4 L213.9,599.4 L213.9,612.3 L220.7,616.9 L232.5,610.5 L242.9,616.9 L221.4,629.5"/>
</g>
</g>
</svg>
</body></html>
